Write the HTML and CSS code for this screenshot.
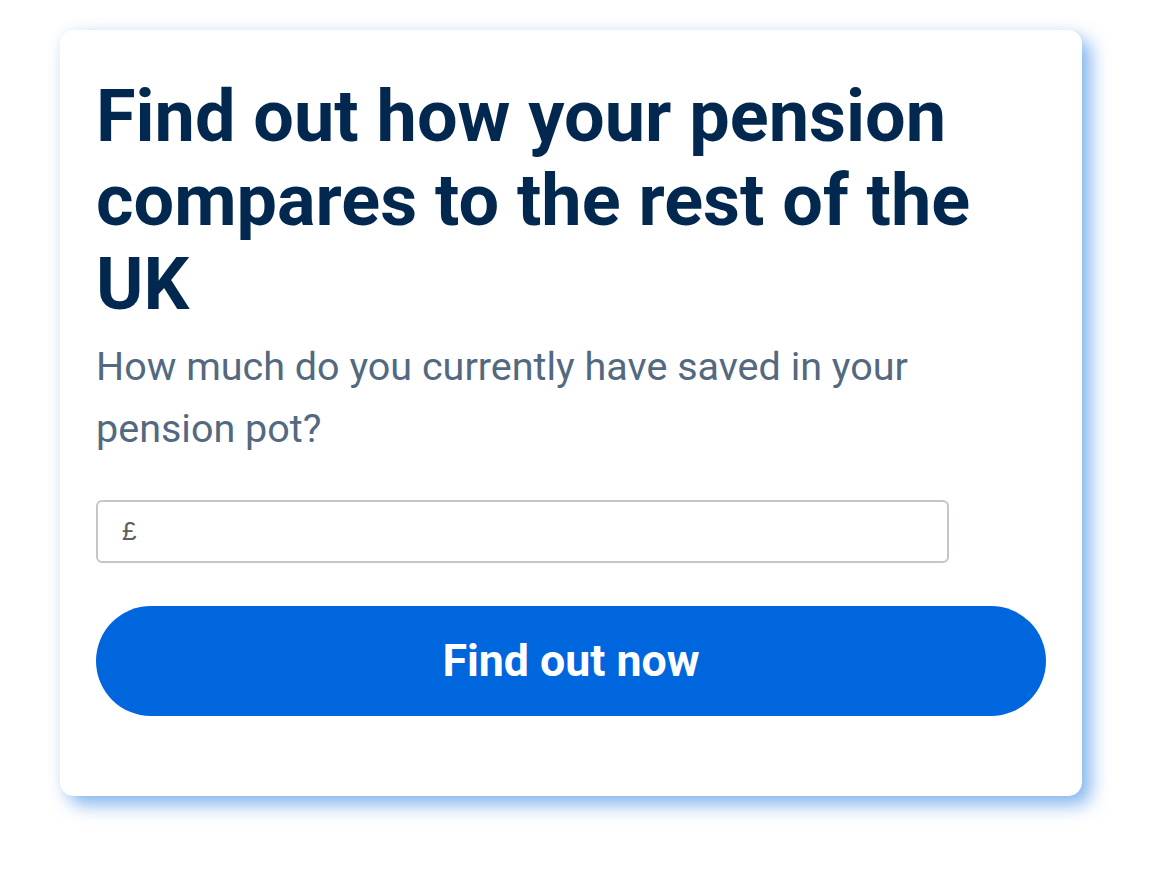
FILE: index.html
```html
<!DOCTYPE html>
<html lang="en">
<head>
<meta charset="utf-8">
<title>Pension comparison</title>
<link rel="stylesheet" href="styles.css">
</head>
<body>
<main class="page">
  <section class="card">
    <h1 class="title">Find out how your pension compares to the rest of the UK</h1>
    <p class="question">How much do you currently have saved in your pension pot?</p>
    <label class="field">
      <span class="currency">£</span>
      <input class="amount" type="text" aria-label="Pension pot amount">
    </label>
    <button class="cta" type="button">Find out now</button>
  </section>
</main>
</body>
</html>
```
FILE: styles.css
```css
html, body {
  margin: 0;
  padding: 0;
  background: #ffffff;
}

.page {
  box-sizing: border-box;
  min-height: 874px;
  padding: 30px 0 40px 60px;
  font-family: Roboto, "Liberation Sans", Arial, sans-serif;
}

.card {
  box-sizing: border-box;
  width: 1022px;
  height: 766px;
  background: #ffffff;
  border-radius: 14px;
  padding: 45px 36px 80px 36px;
  box-shadow: 9px 9px 18px rgba(20, 115, 225, 0.5), 0 0 14px rgba(120, 170, 230, 0.12);
  display: flex;
  flex-direction: column;
}

.title {
  margin: 0;
  font-size: 72px;
  line-height: 84px;
  font-weight: 700;
  color: #03284f;
  max-width: 900px;
}

.question {
  margin: 8.5px 0 0 0;
  font-size: 39.5px;
  line-height: 62px;
  font-weight: 400;
  color: #53697f;
  max-width: 860px;
}

.field {
  box-sizing: border-box;
  margin-top: 40px;
  width: 853px;
  height: 63px;
  flex: 0 0 63px;
  border: 2px solid #c3c6ca;
  border-radius: 6px;
  display: flex;
  align-items: center;
  padding: 0 24px;
  gap: 8px;
}

.currency {
  font-family: "Liberation Sans", Arial, sans-serif;
  font-size: 26px;
  color: #5e5e5e;
}

.amount {
  flex: 1;
  border: 0;
  outline: none;
  font-size: 22px;
  font-family: inherit;
  background: transparent;
  padding: 0;
}

.cta {
  margin-top: 43px;
  width: 950px;
  height: 110px;
  flex: 0 0 110px;
  border: 0;
  border-radius: 55px;
  background: #0066dd;
  color: #ffffff;
  font-family: Roboto, "Liberation Sans", Arial, sans-serif;
  font-size: 44.7px;
  font-weight: 700;
  cursor: pointer;
}
```
